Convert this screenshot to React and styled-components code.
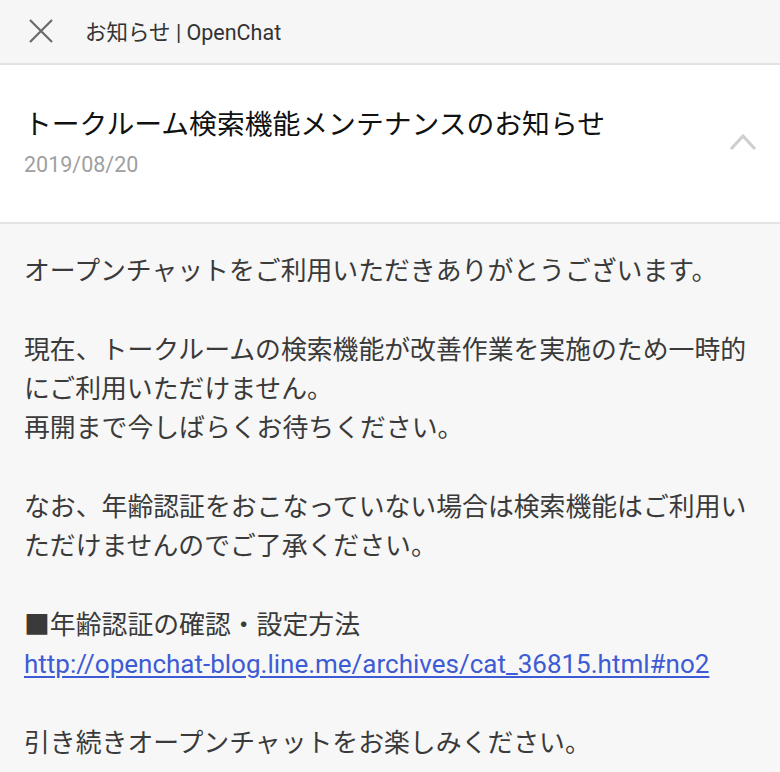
import React from 'react';
import styled, { createGlobalStyle } from 'styled-components';

const GlobalStyle = createGlobalStyle`
  html, body {
    margin: 0;
    padding: 0;
    background: #f7f7f7;
  }
  body {
    font-family: Roboto, "Noto Sans CJK JP", sans-serif;
  }
`;

const Page = styled.div`
  width: 780px;
  height: 772px;
  overflow: hidden;
  background: #f7f7f7;
`;

const TopBar = styled.header`
  display: flex;
  align-items: center;
  height: 65px;
  padding: 0 0 2px 28px;
  background: #f6f6f6;
  border-bottom: 2px solid #e2e2e2;
  box-sizing: border-box;
`;

const CloseButton = styled.button`
  display: flex;
  width: 26px;
  height: 26px;
  padding: 0;
  border: none;
  background: none;
  margin-right: 31px;
`;

const BarTitle = styled.h1`
  margin: 0;
  font-size: 21.5px;
  font-weight: 400;
  color: #333;
`;

const Heading = styled.section`
  display: flex;
  align-items: center;
  justify-content: space-between;
  height: 159px;
  padding: 0 22px 4px 24px;
  box-sizing: border-box;
  background: #fff;
  border-bottom: 2px solid #e4e4e4;
`;

const HeadingText = styled.div`
  display: flex;
  flex-direction: column;
  gap: 6px;
`;

const Title = styled.h2`
  margin: 0;
  font-size: 27.8px;
  font-weight: 400;
  color: #111;
  line-height: 40px;
`;

const DateLine = styled.span`
  font-size: 21.5px;
  color: #a0a0a0;
  line-height: 28px;
`;

const Body = styled.article`
  padding: 28px 24px 0 24px;
  font-size: 25.85px;
  line-height: 39.3px;
  color: #3a3a3a;
`;

const Para = styled.p`
  margin: 0 0 39.3px 0;
  white-space: nowrap;
`;

const Link = styled.a`
  color: #3d5bd4;
  font-size: 26px;
  text-decoration: underline;
  text-underline-offset: 3px;
`;

const CloseIcon = () => (
  <svg width="26" height="26" viewBox="0 0 26 26">
    <path d="M2 2 L24 24 M24 2 L2 24" stroke="#6a6a6a" strokeWidth="2.2" fill="none" />
  </svg>
);

const ChevronUp = () => (
  <svg width="30" height="20" viewBox="0 0 30 20">
    <path d="M3 17 L15 4 L27 17" stroke="#cfcfcf" strokeWidth="3.2" fill="none" />
  </svg>
);

export default function App() {
  return (
    <Page>
      <GlobalStyle />
      <TopBar>
        <CloseButton aria-label="close">
          <CloseIcon />
        </CloseButton>
        <BarTitle>お知らせ | OpenChat</BarTitle>
      </TopBar>
      <Heading>
        <HeadingText>
          <Title>トークルーム検索機能メンテナンスのお知らせ</Title>
          <DateLine>2019/08/20</DateLine>
        </HeadingText>
        <ChevronUp />
      </Heading>
      <Body>
        <Para>オープンチャットをご利用いただきありがとうございます。</Para>
        <Para>
          現在、トークルームの検索機能が改善作業を実施のため一時的
          <br />
          にご利用いただけません。
          <br />
          再開まで今しばらくお待ちください。
        </Para>
        <Para>
          なお、年齢認証をおこなっていない場合は検索機能はご利用い
          <br />
          ただけませんのでご了承ください。
        </Para>
        <Para>
          ■年齢認証の確認・設定方法
          <br />
          <Link href="#">http://openchat-blog.line.me/archives/cat_36815.html#no2</Link>
        </Para>
        <Para>引き続きオープンチャットをお楽しみください。</Para>
      </Body>
    </Page>
  );
}
